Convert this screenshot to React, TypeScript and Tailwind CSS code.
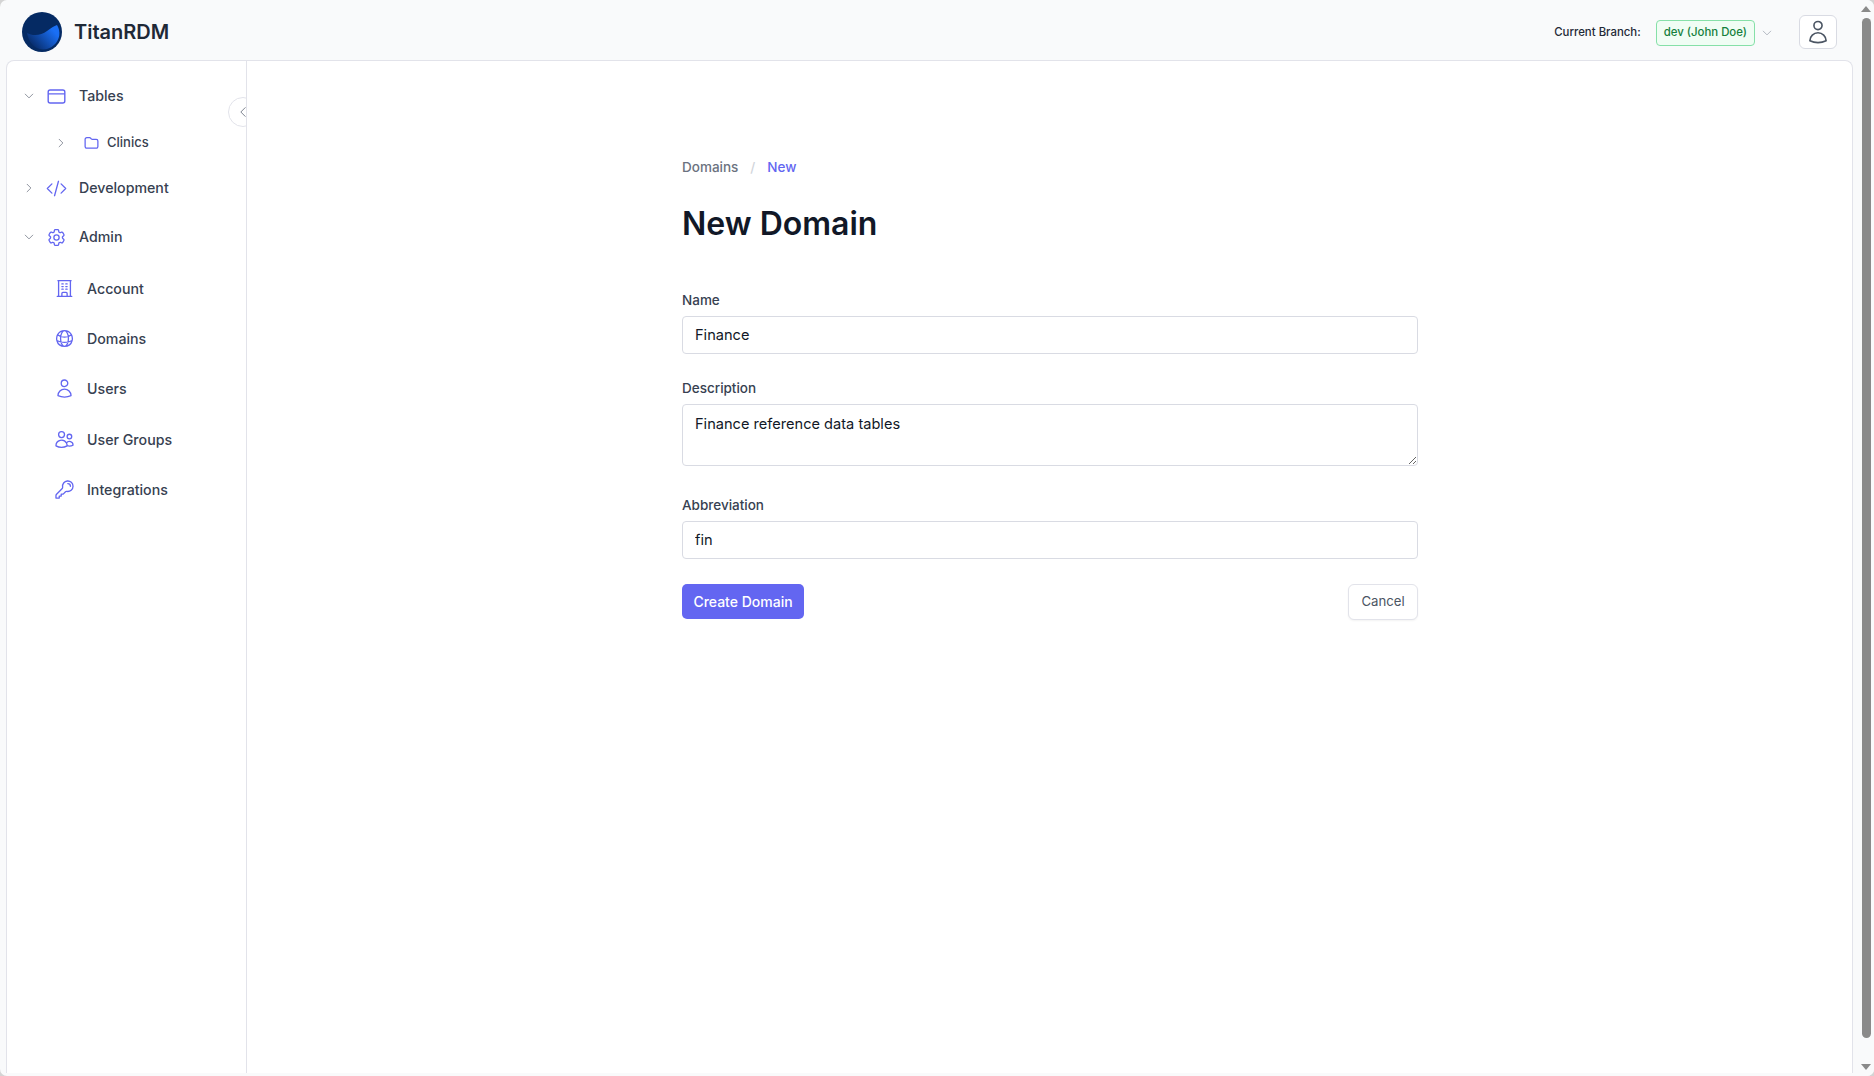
import React from 'react';
import {
  HiOutlineBuildingOffice,
  HiOutlineChevronDown,
  HiOutlineChevronLeft,
  HiOutlineChevronRight,
  HiOutlineCodeBracket,
  HiOutlineCog6Tooth,
  HiOutlineGlobeAlt,
  HiOutlineKey,
  HiOutlineUser,
  HiOutlineUsers,
} from 'react-icons/hi2';

const TablesIcon = ({ className }: { className?: string }) => (
  <svg viewBox="0 0 24 24" fill="none" stroke="currentColor" strokeWidth={1.6} className={className}>
    <rect x="2.5" y="4.5" width="19" height="15" rx="2.25" />
    <path d="M2.5 9h19" />
  </svg>
);

const FolderIcon = ({ className }: { className?: string }) => (
  <svg viewBox="0 0 24 24" fill="none" stroke="currentColor" strokeWidth={1.8} strokeLinejoin="round" className={className}>
    <path d="M3 7.5A2.25 2.25 0 0 1 5.25 5.25h4.19a1.5 1.5 0 0 1 1.06.44l1.5 1.5a1.5 1.5 0 0 0 1.06.44h5.69A2.25 2.25 0 0 1 21 9.88v7.87A2.25 2.25 0 0 1 18.75 20H5.25A2.25 2.25 0 0 1 3 17.75z" />
  </svg>
);

const Logo = () => (
  <svg viewBox="0 0 40 40" className="w-10 h-10 shrink-0">
    <defs>
      <linearGradient id="logoFill" x1="0.1" y1="0.9" x2="0.9" y2="0.35">
        <stop offset="0" stopColor="#06265e" />
        <stop offset="1" stopColor="#1a6ff5" />
      </linearGradient>
    </defs>
    <circle cx="20" cy="20" r="20" fill="#052a63" />
    <path d="M5 21C10 24 19 24 25 19C29 16 32 14 35 13C39 19 38 28 32 33C27 38 19 39 13 35C9 32 6 27 5 21z" fill="url(#logoFill)" />
  </svg>
);

const Branch = () => (
  <div className="flex items-center mt-[1px]">
    <span className="text-[11.4px] font-medium text-[#1f2937] mr-[15px]">Current Branch:</span>
    <span className="h-[26px] px-[7px] flex items-center rounded-[4px] border border-[#86e0a8] bg-[#f0fdf4] text-[11.4px] font-medium text-[#15803d]">dev (John Doe)</span>
    <HiOutlineChevronDown className="w-[12px] h-[12px] text-[#9ca3af] ml-[6px]" />
  </div>
);

const NavHeader = ({ icon: Icon, label, open, cls }: { icon: React.ComponentType<{ className?: string }>; label: string; open: boolean; cls: string }) => (
  <div className={`flex items-center pl-[16px] ${cls}`}>
    {open ? <HiOutlineChevronDown className="w-[12px] h-[12px] text-[#6b7280]" /> : <HiOutlineChevronRight className="w-[12px] h-[12px] text-[#6b7280]" />}
    <Icon className="w-[21px] h-[21px] text-[#6366f1] ml-[11px]" />
    <span className="ml-[12px] text-[14.2px] font-medium text-[#374151]">{label}</span>
  </div>
);

const NavItem = ({ icon: Icon, label }: { icon: React.ComponentType<{ className?: string }>; label: string }) => (
  <div className="flex items-center h-[50.4px] pl-[47px]">
    <Icon className="w-[21px] h-[21px] text-[#6366f1]" />
    <span className="ml-[12px] text-[14.2px] font-medium text-[#374151]">{label}</span>
  </div>
);

const Field = ({ label, value, cls }: { label: string; value: string; cls: string }) => (
  <div className={cls}>
    <label className="block text-[13.5px] font-medium text-[#374151] leading-[20px] mb-[6px]">{label}</label>
    <input readOnly value={value} className="block w-full h-[38px] px-[12px] rounded-[4px] border border-[#d9dbe3] bg-white text-[14.6px] text-[#111827] outline-none" />
  </div>
);

export default function App() {
  return (
    <div className="w-[1874px] h-[1076px] bg-[#d4d4d4]">
      <div className="flex w-full h-full overflow-hidden rounded-[7px] bg-[#f9fafb] font-['Inter',sans-serif]">
        <div className="flex-1 flex flex-col min-w-0">
          <header className="h-[60px] shrink-0 flex items-center justify-between pt-[4px] pl-[22px] pr-[21px]">
            <div className="flex items-center gap-[12px]">
              <Logo />
              <span className="text-[20px] font-semibold text-[#1f2937]">TitanRDM</span>
            </div>
            <div className="flex items-center">
              <Branch />
              <button className="ml-[26px] w-[38px] h-[34px] flex items-center justify-center rounded-[6px] border border-[#d9dbe3] bg-white">
                <HiOutlineUser className="w-[26px] h-[26px] text-[#4b5563]" />
              </button>
            </div>
          </header>
          <div className="flex-1 flex ml-[6px] mr-[5px] mb-[3px] rounded-t-[8px] border border-b-0 border-[#e2e3ea] bg-white overflow-hidden min-h-0">
            <aside className="relative w-[240px] shrink-0 border-r border-[#e2e3ea] pt-[11px] overflow-hidden">
              <NavHeader icon={TablesIcon} label="Tables" open cls="h-[48px]" />
              <div className="flex items-center h-[45px] pl-[48px]">
                <HiOutlineChevronRight className="w-[12px] h-[12px] text-[#6b7280]" />
                <FolderIcon className="w-[17px] h-[17px] text-[#6366f1] ml-[16px]" />
                <span className="ml-[7px] text-[13px] font-medium text-[#374151]">Clinics</span>
              </div>
              <NavHeader icon={HiOutlineCodeBracket} label="Development" open={false} cls="h-[46px]" />
              <NavHeader icon={HiOutlineCog6Tooth} label="Admin" open cls="h-[52px]" />
              <NavItem icon={HiOutlineBuildingOffice} label="Account" />
              <NavItem icon={HiOutlineGlobeAlt} label="Domains" />
              <NavItem icon={HiOutlineUser} label="Users" />
              <NavItem icon={HiOutlineUsers} label="User Groups" />
              <NavItem icon={HiOutlineKey} label="Integrations" />
              <button className="absolute top-[36px] -right-[12px] w-[30px] h-[30px] rounded-full border border-[#e2e3ea] bg-white flex items-center pl-[7px]">
                <HiOutlineChevronLeft className="w-[14px] h-[14px] text-[#6b7280]" />
              </button>
            </aside>
            <main className="flex-1 min-w-0 pt-[96px] pl-[435px]">
              <div className="w-[736px]">
                <nav className="flex items-center text-[13.5px] font-medium leading-[20px]">
                  <span className="text-[#6b7280]">Domains</span>
                  <span className="mx-[12px] text-[#d1d5db]">/</span>
                  <span className="text-[#6366f1]">New</span>
                </nav>
                <h1 className="mt-[27px] text-[32px] leading-[40px] font-semibold text-[#111827]">New Domain</h1>
                <Field label="Name" value="Finance" cls="mt-[46px]" />
                <div className="mt-[24px]">
                  <label className="block text-[13.5px] font-medium text-[#374151] leading-[20px] mb-[6px]">Description</label>
                  <textarea readOnly value="Finance reference data tables" className="block w-full h-[62px] px-[12px] py-[8px] rounded-[4px] border border-[#d9dbe3] bg-white text-[14.6px] leading-[22px] text-[#111827] outline-none" />
                </div>
                <Field label="Abbreviation" value="fin" cls="mt-[29px]" />
                <div className="mt-[25px] flex items-start justify-between">
                  <button className="h-[35px] w-[122px] rounded-[5px] bg-[#6366f1] text-white text-[14px] font-medium">Create Domain</button>
                  <button className="h-[36px] w-[70px] rounded-[6px] border border-[#e2e3ea] bg-white text-[13.2px] text-[#4b5563] shadow-xs">Cancel</button>
                </div>
              </div>
            </main>
          </div>
        </div>
        <div className="w-[16px] shrink-0 flex flex-col items-center bg-[#f9fafb] pt-[6px] pb-[6px]">
          <div className="w-0 h-0 border-x-[5px] border-x-transparent border-b-[6px] border-b-[#8a8a8a]" />
          <div className="w-[9px] h-[1020px] mt-[6px] rounded-full bg-[#8a8a8a]" />
          <div className="flex-1" />
          <div className="w-0 h-0 border-x-[5px] border-x-transparent border-t-[6px] border-t-[#8a8a8a]" />
        </div>
      </div>
    </div>
  );
}
